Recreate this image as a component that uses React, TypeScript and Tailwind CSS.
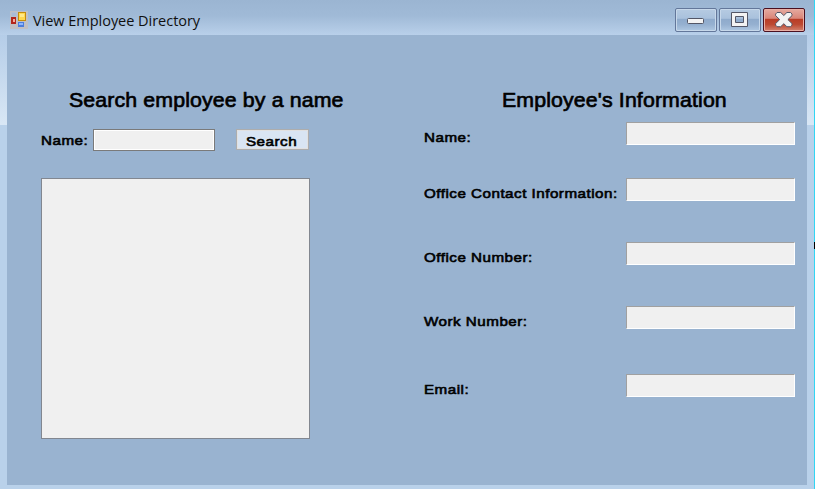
import React from "react";

const FONT = "font-['Liberation_Sans',Arial,sans-serif]";
const LABEL = `${FONT} block origin-left scale-x-[1.14] whitespace-nowrap text-left text-[13.33px] leading-4 tracking-[0.43px] text-black [-webkit-text-stroke:0.6px_black]`;
const HEADING = `${FONT} origin-left scale-x-[1.04] whitespace-nowrap text-[20.5px] leading-6 tracking-[0.12px] text-black [-webkit-text-stroke:0.65px_black]`;

function AppIcon() {
  return (
    <svg width="18" height="18" viewBox="0 0 18 18" className="block">
      <rect width="18" height="18" fill="#c0c0c4" />
      <rect x="1.5" y="1.5" width="5" height="4" fill="#a9bcd6" stroke="#b4c0d0" />
      <rect x="1" y="6" width="5" height="7" fill="#b3261b" />
      <rect x="3" y="8" width="2" height="3" fill="#f6aa9d" />
      <rect x="8.5" y="1.5" width="7" height="8" fill="#ffd84d" stroke="#c58d0b" />
      <rect x="10" y="3" width="4" height="3" fill="#ffe98a" />
      <rect x="8" y="11" width="6" height="5" fill="#4c7ddd" />
      <rect x="9" y="12" width="4" height="2" fill="#91b7fa" />
    </svg>
  );
}

function WindowButton({ kind }: { kind: "min" | "max" | "close" }) {
  const close = kind === "close";
  return (
    <button
      aria-label={kind}
      className={`flex h-6 w-[42px] items-center justify-center rounded-[2px] border ${
        close
          ? "border-[#4a1020] bg-[linear-gradient(#e5aaa0_0%,#d98578_43%,#b93b25_44%,#bc4932_70%,#d38370_100%)] shadow-[inset_0_0_0_1px_#e9afa5]"
          : "border-[#63779a] bg-[linear-gradient(#b6cbe2_0%,#a9c1dc_43%,#8eaacb_44%,#95b0d0_70%,#afc8e2_100%)] shadow-[inset_0_0_0_1px_#c7d8ea]"
      }`}
    >
      <svg width="40" height="22" viewBox="0 0 40 22" className="block">
        {kind === "min" && (
          <rect x="11.5" y="9.5" width="16" height="5" rx="1" fill="#f3f3f3" stroke="#535666" />
        )}
        {kind === "max" && (
          <path
            d="M11.5 3.5h16v14h-16zM15.5 7.5v6h8v-6z"
            fill="#f3f3f3"
            fillRule="evenodd"
            stroke="#535666"
            strokeLinejoin="round"
          />
        )}
        {close && (
          <path
            d="M13 3.5h3.7l3.1 3 3.1-3h3.7l1.4 1.6v1.5l-4.1 4 4.1 4v1.5l-1.4 1.6h-3.7l-3.1-3-3.1 3H13l-1.4-1.6v-1.5l4.1-4-4.1-4V5.1z"
            fill="#f3f3f3"
            stroke="#535666"
            strokeLinejoin="round"
          />
        )}
      </svg>
    </button>
  );
}

function Field({ label, gap }: { label: string; gap: string }) {
  return (
    <div className={`flex h-6 ${gap}`}>
      <div className="w-[202px] pt-2">
        <span className={LABEL}>{label}</span>
      </div>
      <div className="h-[23px] w-[169px] border border-t-[#a0a0a0] border-r-white border-b-white border-l-[#a0a0a0] bg-[#f0f0f0]" />
    </div>
  );
}

function SideFrame() {
  return (
    <div className="w-[7px] shrink-0">
      <div className="h-[90px] bg-[linear-gradient(#b5cde8,#d9e7f5)]" />
      <div className="h-[360px] bg-[#b9d1ea]" />
    </div>
  );
}

export default function App() {
  return (
    <div className="flex h-[489px] w-[815px] overflow-hidden bg-[#b9d1ea]">
      <div className="w-[814px] shrink-0">
        <header className="flex h-[35px] bg-[linear-gradient(#9bb5d2,#a0bad7_45%,#b9d0ea)] pl-[10px]">
          <div className="pt-[11px]">
            <AppIcon />
          </div>
          <h1 className="ml-[5px] w-[642px] pt-[11px] font-['Open_Sans','Noto_Sans',sans-serif] text-[14.5px] leading-[19px] tracking-[-0.03px] text-[#101010]">
            View Employee Directory
          </h1>
          <div className="flex gap-[2px] pt-2">
            <WindowButton kind="min" />
            <WindowButton kind="max" />
            <WindowButton kind="close" />
          </div>
        </header>
        <div className="flex h-[450px]">
          <SideFrame />
          <main className="flex h-[450px] w-[800px] shrink-0 bg-[#99b3d0]">
            <section className="w-[417px] pl-[34px] pt-[53px]">
              <h2 className={`${HEADING} ml-[27.5px]`}>Search employee by a name</h2>
              <div className="mt-[17px] flex h-[22px]">
                <div className="w-[52px] pt-1">
                  <span className={LABEL}>Name:</span>
                </div>
                <input
                  aria-label="Name"
                  className="h-[22px] w-[122px] border border-[#7a7a7a] bg-[#f0f0f0] shadow-[inset_0_0_0_1px_white] outline-none"
                />
                <button className="ml-[21px] h-[21px] w-[73px] border border-[#adadad] bg-[#d9e5f3] pl-[9px] pt-1 text-left shadow-[inset_0_0_0_1px_#e1e1e1]">
                  <span className={LABEL}>Search</span>
                </button>
              </div>
              <div className="mt-[27px] h-[261px] w-[269px] border border-[#828790] bg-[#f0f0f0]" />
            </section>
            <section className="pt-[53px]">
              <h2 className={`${HEADING} ml-[78px]`}>Employee's Information</h2>
              <Field label="Name:" gap="mt-[10px]" />
              <Field label="Office Contact Information:" gap="mt-8" />
              <Field label="Office Number:" gap="mt-10" />
              <Field label="Work Number:" gap="mt-10" />
              <Field label="Email:" gap="mt-11" />
            </section>
          </main>
          <SideFrame />
        </div>
      </div>
      <div className="w-px">
        <div className="h-[242px] bg-[#31d5f3]" />
        <div className="h-[7px] bg-black" />
        <div className="h-[240px] bg-[#31d5f3]" />
      </div>
    </div>
  );
}
